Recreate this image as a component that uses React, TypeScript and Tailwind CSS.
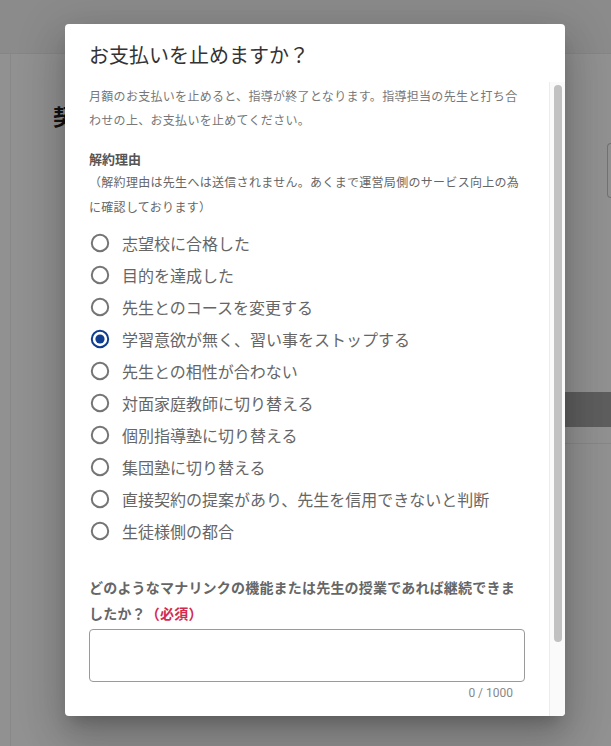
import React from "react"

const reasons = [
  "志望校に合格した",
  "目的を達成した",
  "先生とのコースを変更する",
  "学習意欲が無く、習い事をストップする",
  "先生との相性が合わない",
  "対面家庭教師に切り替える",
  "個別指導塾に切り替える",
  "集団塾に切り替える",
  "直接契約の提案があり、先生を信用できないと判断",
  "生徒様側の都合",
]

const Radio = ({ checked }: { checked: boolean }) => (
  <svg width="20" height="20" viewBox="0 0 20 20" className="shrink-0">
    <circle cx="10" cy="10" r="8.2" fill="none" stroke={checked ? "#0f3d8f" : "#757575"} strokeWidth="2" />
    {checked && <circle cx="10" cy="10" r="4.6" fill="#0f3d8f" />}
  </svg>
)

export default function App() {
  const font = { fontFamily: '"Noto Sans CJK JP", "Noto Sans", sans-serif' }
  return (
    <div className="relative h-[746px] w-[611px] overflow-hidden bg-white" style={font}>
      {/* page behind the dialog */}
      <div className="h-[54px] border-b border-[#ececec] bg-[#f5f5f5]" />
      <div className="ml-[10px] flex h-[692px] border-l border-[#f0f0f0]">
        <div className="flex-1 pl-[42px] pt-[45px]">
          <h1 className="text-[22px] font-bold leading-[33px] text-[#222]">契約内容</h1>
          <div className="-mr-[4px] ml-[60px] mt-[260px] h-[35px] bg-[#a6a6a6]" />
          <div className="-mr-[4px] ml-[60px] mt-[16px] h-px bg-[#eeeeee]" />
        </div>
        <div className="w-[4px] pt-[89px]">
          <div className="h-[55px] rounded-l border border-r-0 border-[#c8c8c8]" />
        </div>
      </div>

      {/* overlay */}
      <div className="absolute inset-0 bg-black/[0.43] pl-[65px] pt-[24px]">
        <div className="flex h-[692px] w-[500px] flex-col overflow-hidden rounded bg-white shadow-[0_11px_15px_-7px_rgba(0,0,0,0.2),0_24px_38px_3px_rgba(0,0,0,0.14),0_9px_46px_8px_rgba(0,0,0,0.12)]">
          <div className="px-6 pb-[12px] pt-4 text-[20px] leading-[30px] text-[#333]">お支払いを止めますか？</div>
          <div className="flex min-h-0 flex-1">
            <div className="min-w-0 flex-1 overflow-hidden px-6 pt-[2px]">
              <p className="text-[12px] leading-[24px] tracking-[0.3px] text-[#777]">
                月額のお支払いを止めると、指導が終了となります。指導担当の先生と打ち合わせの上、お支払いを止めてください。
              </p>
              <div className="mt-4 text-[13px] font-bold leading-[21px] text-[#555]">解約理由</div>
              <p className="text-[12px] leading-[25px] tracking-[0.3px] text-[#666]">
                （解約理由は先生へは送信されません。あくまで運営局側のサービス向上の為に確認しております）
              </p>
              <div className="mt-2 flex flex-col">
                {reasons.map((r, i) => (
                  <label key={r} className="flex h-8 items-center gap-3 pl-px text-[16px] text-[#666]">
                    <Radio checked={i === 3} />
                    <span>{r}</span>
                  </label>
                ))}
              </div>
              <div className="mt-[27px] text-[14px] font-bold leading-[26px] tracking-[0.2px] text-[#666]">
                どのようなマナリンクの機能または先生の授業であれば継続できましたか？
                <span className="text-[#d22b4f]">（必須）</span>
              </div>
              <textarea className="mt-[3px] block h-[53px] w-full resize-none rounded border border-[#9a9a9a] outline-none" />
              <div className="pr-3 pt-[2px] text-right text-[12px] leading-[18px] text-[#888]" style={{ fontFamily: "Roboto, sans-serif" }}>
                0 / 1000
              </div>
            </div>
            <div className="flex w-[16px] shrink-0 justify-center border-l border-[#ececec] bg-[#fafafa] pl-px pt-[3px]">
              <div className="h-[557px] w-2 rounded-full bg-[#c1c1c1]" />
            </div>
          </div>
        </div>
      </div>
    </div>
  )
}
